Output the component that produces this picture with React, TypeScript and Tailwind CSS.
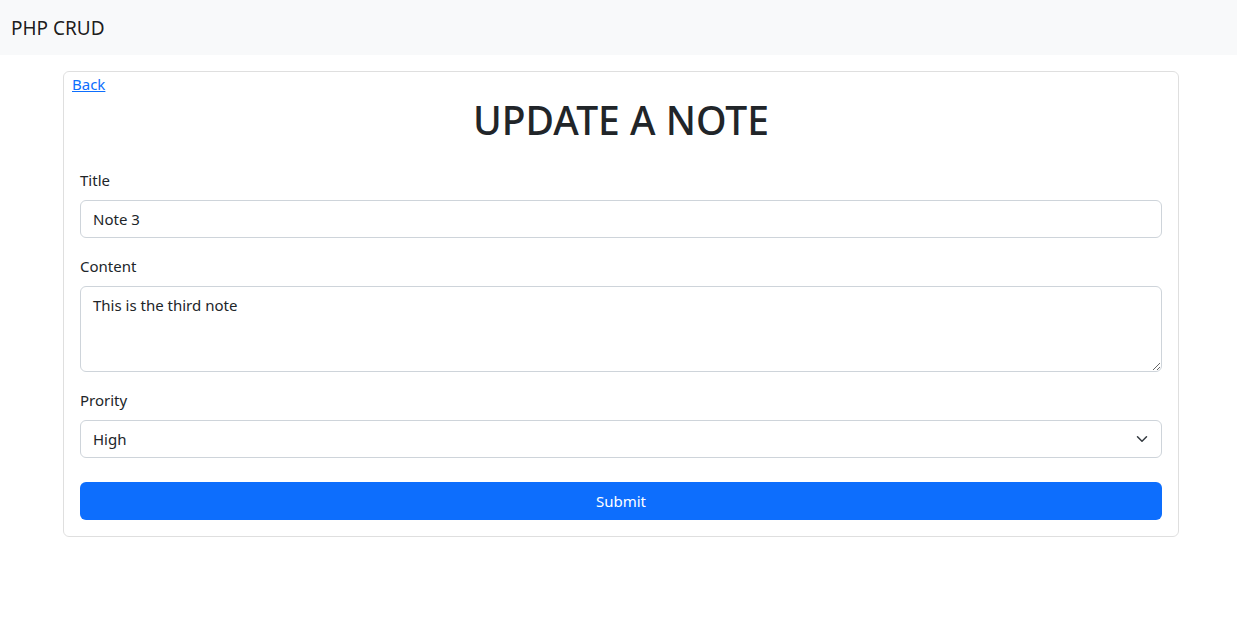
import { useState } from "react";

export default function App() {
  const [title, setTitle] = useState("Note 3");
  const [content, setContent] = useState("This is the third note");
  const [priority, setPriority] = useState("High");

  return (
    <div className="min-h-screen bg-white text-[#212529] text-[15px] leading-6 font-['Noto_Sans',sans-serif]">
      <nav className="h-[55px] bg-[#f8f9fa] flex items-center px-[11px]">
        <a href="#" className="text-[19px] text-black/90 leading-[30px]">
          PHP CRUD
        </a>
      </nav>

      <div className="mt-4 ml-[63px] w-[1116px] border border-black/[0.125] rounded-md">
        <a href="#" className="inline-block ml-2 text-[#0d6efd] underline">
          Back
        </a>
        <h1 className="text-center text-[39px] leading-[48px] font-medium mb-2">UPDATE A NOTE</h1>

        <form className="p-4" onSubmit={(e) => e.preventDefault()}>
          <div className="mb-4">
            <label className="block mb-2">Title</label>
            <input
              type="text"
              value={title}
              onChange={(e) => setTitle(e.target.value)}
              className="block w-full h-[38px] px-3 py-1.5 border border-[#ced4da] rounded-md outline-none"
            />
          </div>
          <div className="mb-4">
            <label className="block mb-2">Content</label>
            <textarea
              rows={3}
              value={content}
              onChange={(e) => setContent(e.target.value)}
              className="block w-full h-[86px] px-3 py-1.5 border border-[#ced4da] rounded-md outline-none resize-y"
            />
          </div>
          <div className="mb-6">
            <label className="block mb-2">Prority</label>
            <div className="relative">
              <select
                value={priority}
                onChange={(e) => setPriority(e.target.value)}
                className="block w-full h-[38px] pl-3 pr-9 py-1.5 border border-[#ced4da] rounded-md outline-none appearance-none bg-white"
              >
                <option>Low</option>
                <option>Medium</option>
                <option>High</option>
              </select>
              <svg
                className="absolute right-3 top-[13px] pointer-events-none"
                width="16"
                height="12"
                viewBox="0 0 16 16"
                fill="none"
                stroke="#343a40"
                strokeWidth="2"
                strokeLinecap="round"
                strokeLinejoin="round"
              >
                <path d="m2 5 6 6 6-6" />
              </svg>
            </div>
          </div>
          <button type="submit" className="block w-full h-[38px] bg-[#0d6efd] text-white rounded-md">
            Submit
          </button>
        </form>
      </div>
    </div>
  );
}
